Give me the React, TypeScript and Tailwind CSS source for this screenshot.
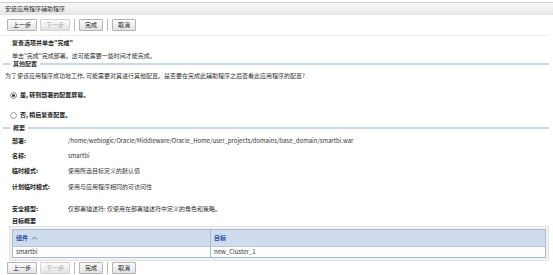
import React from 'react'

const font = { fontFamily: '"Noto Sans CJK SC", "Liberation Sans", sans-serif' }

const Btn: React.FC<{ label: string; disabled?: boolean }> = ({ label, disabled }) => (
  <button
    className={`h-[12px] px-[5px] text-[6px] leading-[10px] border rounded-[1px] bg-gradient-to-b from-[#fdfdfd] to-[#e2e2e2] ${
      disabled ? 'border-[#d4d4d4] text-[#aaa]' : 'border-[#b5b5b5] text-[#222]'
    }`}
  >
    {label}
  </button>
)

const Toolbar: React.FC = () => (
  <div className="flex items-center h-[12px] gap-[3px] pl-[7px]">
    <Btn label="上一步" />
    <Btn label="下一步" disabled />
    <div className="w-px h-[12px] bg-[#bbb] mx-[1px]" />
    <Btn label="完成" />
    <div className="w-px h-[12px] bg-[#bbb] mx-[1px]" />
    <Btn label="取消" />
  </div>
)

const SectionTitle: React.FC<{ title: string }> = ({ title }) => (
  <div className="flex items-center gap-[3px] pl-[3px] pr-[4px] h-[8px]">
    <div className="w-[7px] h-[2px] bg-[#c9d7e6]" />
    <span className="text-[6px] font-bold text-[#333] leading-[8px]">{title}</span>
    <div className="flex-1 h-[2px] bg-[#c9d7e6]" />
  </div>
)

const Row: React.FC<{ label: string; value: string; h: string }> = ({ label, value, h }) => (
  <div className={`flex items-center ${h}`}>
    <span className="w-[56px] pl-[12px] box-content font-bold text-[#222]">{label}</span>
    <span className="text-[#333]">{value}</span>
  </div>
)

const App: React.FC = () => {
  return (
    <div className="w-[553px] h-[275px] bg-white overflow-hidden text-[6px] leading-[8px] text-[#333]" style={font}>
      {/* Title bar */}
      <div className="mt-[2px] h-[13px] border-t border-[#cfcfcf] bg-gradient-to-b from-[#f9f9f9] to-[#e6e6e6] pl-[5px] flex items-center">
        <span className="text-[6px] text-[#333]">安装应用程序辅助程序</span>
      </div>

      <div className="mt-[4px]">
        <Toolbar />
      </div>
      <div className="mt-[4px] mr-[4px] h-px bg-[#eeeeee]" />

      <div className="pl-[12px] mt-[3px] h-[8px] font-bold text-[#222]">复查选项并单击"完成"</div>
      <div className="pl-[12px] mt-[5px] h-[8px] text-[#333]">单击"完成"完成部署。这可能需要一些时间才能完成。</div>

      <div className="mt-0">
        <SectionTitle title="其他配置" />
      </div>
      <div className="pl-[5px] mt-[4px] h-[8px]">
        为了使该应用程序成功地工作, 可能需要对其进行其他配置。是否要在完成此辅助程序之后查看此应用程序的配置?
      </div>

      <div className="flex items-center pl-[10px] mt-[11px] h-[8px] gap-[3px]">
        <span className="w-[7px] h-[7px] rounded-full border border-[#888] bg-white flex items-center justify-center">
          <span className="w-[3px] h-[3px] rounded-full bg-[#333]" />
        </span>
        <span className="font-bold text-[#222]">是, 转到部署的配置屏幕。</span>
      </div>
      <div className="flex items-center pl-[10px] mt-[12px] h-[8px] gap-[3px]">
        <span className="w-[7px] h-[7px] rounded-full border border-[#999] bg-white" />
        <span className="font-bold text-[#222]">否, 稍后复查配置。</span>
      </div>

      <div className="mt-[5px]">
        <SectionTitle title="概要" />
      </div>

      <div className="mt-[1px]">
        <Row label="部署:" value="/home/weblogic/Oracle/Middleware/Oracle_Home/user_projects/domains/base_domain/smartbi.war" h="h-[15px]" />
        <Row label="名称:" value="smartbi" h="h-[15px]" />
        <Row label="临时模式:" value="使用所选目标定义的默认值" h="h-[16px]" />
        <Row label="计划临时模式:" value="使用与应用程序相同的可访问性" h="h-[16px]" />
        <div className="h-[6px]" />
        <Row label="安全模型:" value="仅部署描述符: 仅使用在部署描述符中定义的角色和策略。" h="h-[15px]" />
      </div>

      <div className="pl-[12px] mt-[1px] h-[7px] leading-[7px] font-bold text-[#222]">目标概要</div>

      {/* Target table */}
      <div className="ml-[9px] mr-[4px] mt-[2px] border border-[#e2e2e2] bg-[#f2f2f2] p-[2px]">
        <div className="border border-[#a9bad0] bg-white">
          <div className="flex h-[17px] bg-[#cfdcee] border-b border-[#b7c7db]">
            <div className="w-[198px] border-r border-[#a9bad0] flex items-center pl-[3px] gap-[3px] font-bold text-[#2a4aa8]">
              组件
              <svg width="7" height="4" viewBox="0 0 7 4">
                <path d="M0.5 3.5 L3.5 0.5 L6.5 3.5" fill="none" stroke="#8a9ab5" strokeWidth="1" />
                <path d="M2 3.5 L3.5 2 L5 3.5" fill="none" stroke="#8a9ab5" strokeWidth="1" />
              </svg>
            </div>
            <div className="flex-1 flex items-center pl-[3px] font-bold text-[#2a4aa8]">目标</div>
          </div>
          <div className="flex h-[10px]">
            <div className="w-[198px] border-r border-[#a9bad0] flex items-center pl-[3px]">smartbi</div>
            <div className="flex-1 flex items-center pl-[3px]">new_Cluster_1</div>
          </div>
        </div>
      </div>

      <div className="mt-[1px]">
        <Toolbar />
      </div>
    </div>
  )
}

export default App
